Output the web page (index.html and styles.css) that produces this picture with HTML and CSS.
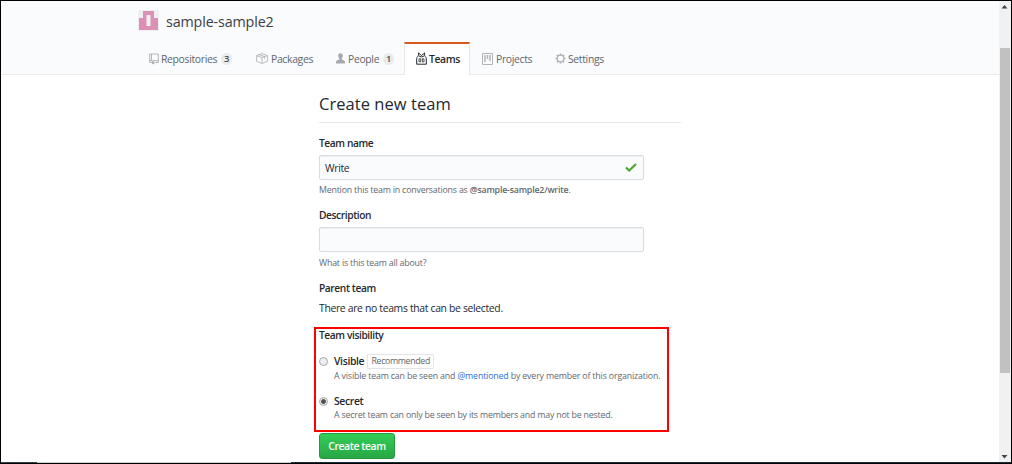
FILE: index.html
```html
<!DOCTYPE html>
<html lang="en">
<head>
<meta charset="utf-8">
<title>Create new team</title>
<link rel="stylesheet" href="styles.css">
</head>
<body>
<div class="window">
  <div class="page">
    <header class="header">
      <div class="org">
        <svg class="avatar" width="21" height="21" viewBox="0 0 21 21"><rect width="21" height="21" fill="#f0f0f0"/><path fill="#db90b5" d="M5 1h11v7h4v12H1V8h4zM8.500 5v11h4V5z" fill-rule="evenodd"/></svg>
        <span class="org-name">sample-sample2</span>
      </div>
      <nav class="tabs">
        <a class="tab repos"><svg width="10" height="12" viewBox="0 0 10 12" fill="none" stroke="#b2b5b9"><path d="M3 9.500H.7V1h8.600v8.500H6.500M2.500 1v6.500M.7 7.700h8.600"/><path d="M3 8.500v3l1.200-1 1.200 1v-3" fill="#a5a9ad" stroke="none"/></svg><span class="text">Repositories</span><span class="count">3</span></a>
        <a class="tab packages"><svg width="12" height="11" viewBox="0 0 12 11" fill="none" stroke="#b2b5b9" stroke-width=".9"><path d="M.6 2.600 6 .6l5.400 2v5.800L6 10.400.6 8.400zM.6 2.600 6 4.500l5.400-1.900M6 4.500v5.900M3 1.600l5.500 2v2.200"/></svg><span class="text">Packages</span></a>
        <a class="tab people"><svg width="9" height="11" viewBox="0 0 9 11"><path fill="#a5a9ad" d="M4.500.3C6 .3 6.900 1.200 6.800 2.800c0 1.200-.5 2-1.100 2.700v1C7.500 7 9 7.700 9 9v1.500H0V9c0-1.300 1.500-2 3.300-2.500v-1C2.700 4.800 2.200 4 2.200 2.800 2.100 1.200 3 .3 4.500.3z"/></svg><span class="text">People</span><span class="count">1</span></a>
        <a class="tab teams"><svg width="11" height="13" viewBox="0 0 11 13" fill="none" stroke="#24292e"><path d="M2.500.8v2C2.500 4.500.7 5 .7 6.500v5.700h9.600V6.500C10.300 5 8.500 4.500 8.500 2.800v-2M2.500 1l3 2.500 3-2.500M3 4l2.500 1L8 4"/><path d="M3 6.800h1.700v3H3zM6.300 6.800H8v3H6.300z" stroke-width=".8"/></svg><span class="text">Teams</span></a>
        <a class="tab projects"><svg width="11" height="12" viewBox="0 0 11 12" fill="none" stroke="#b2b5b9"><path d="M.5.500h10v11H.500z"/><path d="M3 2v7M5.500 2v4M8 2v6" stroke-width="1.500"/></svg><span class="text">Projects</span></a>
        <a class="tab settings"><svg width="11" height="11" viewBox="0 0 11 11" fill="none" stroke="#aeb1b5"><circle cx="5.500" cy="5.500" r="3.300" stroke-width="1.200"/><path d="M5.500.5v1.500M5.500 9v1.500M.5 5.500H2M9 5.500h1.500M1.900 1.900 3 3M8 8l1.100 1.100M1.900 9.100 3 8M8 3l1.100-1.100" stroke-width="1.500"/></svg><span class="text">Settings</span></a>
      </nav>
    </header>
    <main class="form">
      <h1 class="title"><span>Create new team</span></h1>
      <label class="label name-label">Team name</label>
      <div class="input"><span class="value">Write</span><svg width="12" height="9" viewBox="0 0 12 9"><path d="m1 4.500 3.200 3L11 1" fill="none" stroke="#4aa82b" stroke-width="2.200"/></svg></div>
      <p class="note mention">Mention this team in conversations as <b>@sample-sample2/write</b>.</p>
      <label class="label desc-label">Description</label>
      <div class="input"></div>
      <p class="note about">What is this team all about?</p>
      <div class="label parent-label">Parent team</div>
      <p class="none">There are no teams that can be selected.</p>
      <section class="visibility">
        <div class="label vis-label">Team visibility</div>
        <div class="option"><i class="radio"></i><b class="visible">Visible</b><span class="badge">Recommended</span></div>
        <p class="note vis-note">A visible team can be seen and <a>@mentioned</a> by every member of this organization.</p>
        <div class="option second"><i class="radio on"></i><b class="secret">Secret</b></div>
        <p class="note secret-note">A secret team can only be seen by its members and may not be nested.</p>
        <div class="highlight"></div>
      </section>
      <button class="create"><span>Create team</span></button>
    </main>
  </div>
  <div class="scrollbar">
    <svg width="11" height="11" viewBox="0 0 11 11"><path d="M2.500 7.500h6l-3-3.500z" fill="#444"/></svg>
    <div class="thumb"></div>
    <svg width="11" height="11" viewBox="0 0 11 11"><path d="M2.500 4h6l-3 3.500z" fill="#444"/></svg>
  </div>
</div>
<div class="taskbar"></div>
</body>
</html>
```

FILE: styles.css
```css
* { box-sizing: border-box; }
body { margin: 0; width: 1012px; height: 464px; overflow: hidden; background: #fff; border: 1px solid #000; font: 10.4px "Open Sans", "Noto Sans", sans-serif; letter-spacing: -0.33px; color: #24292e; }
.window { display: flex; height: 461px; }
.page { width: 998px; overflow: hidden; }
.header { height: 74px; background: #fafbfd; border-bottom: 1px solid #e9ebee; display: flex; flex-direction: column; justify-content: space-between; }
.org { display: flex; align-items: center; padding: 7px 0 0 137px; height: 32px; }
.org-name { margin: 2px 0 0 7px; font-size: 14.3px; line-height: 20px; letter-spacing: -0.14px; color: #3c4045; }
.tabs { display: flex; height: 33px; margin: 0 0 -1px 137px; }
.tab { display: flex; align-items: center; height: 33px; color: #60666d; white-space: nowrap; }
.tab .text { margin-left: 2px; }
.tab svg { flex: none; }
.repos { width: 107px; padding-left: 11px; }
.packages { width: 80px; padding-left: 11px; }
.packages .text { margin-left: 3px; }
.people { width: 79px; padding-left: 11px; }
.people .text { margin-left: 3px; }
.teams { width: 66px; padding: 0 0 2px 11px; background: #fff; border: 1px solid #e5e7ea; border-top: 2px solid #d8591e; border-bottom: 0; color: #24292e; font-weight: 600; letter-spacing: -0.4px; }
.projects { width: 73px; padding-left: 12px; }
.projects .text { margin-left: 3px; }
.settings { padding-left: 12px; }
.count { margin-left: 4px; width: 11px; height: 12px; border-radius: 6px; background: #e9ebed; color: #4b5056; font-size: 9.5px; line-height: 12px; font-weight: 600; letter-spacing: 0; text-align: center; }
.form { width: 362px; margin-left: 318px; }
.title { margin: 0; height: 48px; padding-top: 18px; border-bottom: 1px solid #e5e8eb; font-size: 16.5px; font-weight: 400; line-height: 22px; letter-spacing: 0.05px; white-space: nowrap; }
.label { display: block; height: 14px; line-height: 14px; font-size: 10.2px; font-weight: 600; white-space: nowrap; }
.label { letter-spacing: -0.4px; }
.name-label { margin: 13px 0 5px; }
.input { width: 325px; height: 25px; border: 1px solid #d8dce0; border-radius: 2px; background: #fafbfd; display: flex; align-items: center; justify-content: space-between; padding: 0 6px 0 5px; box-shadow: inset 0 1px 1px #eff1f3; }
p { margin: 0; white-space: nowrap; }
.note { height: 14px; line-height: 14px; font-size: 8.8px; letter-spacing: -0.19px; color: #62686f; }
.mention { margin-top: 3px; }
.note b { font-weight: 600; }
.note a { color: #2a70dc; }
.desc-label { margin: 11px 0 5px; }
.about { margin-top: 4px; }
.parent-label { margin-top: 11px; }
.none { margin-top: 6px; height: 14px; line-height: 14px; }
.visibility { position: relative; margin-top: 13px; }
.option { display: flex; align-items: center; height: 14px; margin-top: 12px; }
.option.second { margin-top: 11px; }
.radio { width: 9px; height: 9px; border: 1px solid #a8a8a8; border-radius: 50%; background: #eee; margin-right: 6px; }
.radio.on { background: radial-gradient(circle, #505050 0 2px, #eee 2.7px); }
.option b { font-weight: 600; letter-spacing: -0.35px; }
.badge { margin-left: 3px; width: 67px; height: 15px; border: 1px solid #e2e4e7; border-radius: 1px; font-size: 8.8px; line-height: 13px; text-align: center; color: #60666d; }
.vis-note, .secret-note { margin-left: 15px; }
.vis-note { margin-top: 1px; letter-spacing: -0.155px; }
.highlight { position: absolute; left: -5px; top: -1px; width: 355px; height: 105px; border: 2px solid #f00; }
.create { display: block; margin-top: 11px; width: 76px; height: 26px; padding: 0; border: 1px solid #27983f; border-radius: 3px; background: linear-gradient(#34ce57, #28a745); color: #fff; font: 600 10.4px/24px "Open Sans", "Noto Sans", sans-serif; letter-spacing: -0.4px; white-space: nowrap; }
.scrollbar { width: 12px; height: 461px; padding: 0 1px 0 1px; background: #f0f1f2; display: flex; flex-direction: column; }
.scrollbar svg { flex: none; margin-left: -1px; }
.thumb { width: 10px; height: 325px; margin: 36px 0 78px; background: #c1c1c1; }
.taskbar { height: 1px; background: linear-gradient(90deg, #2b4347 0 36px, #c7cdca 36px 290px, #172b3b 290px); }
```
